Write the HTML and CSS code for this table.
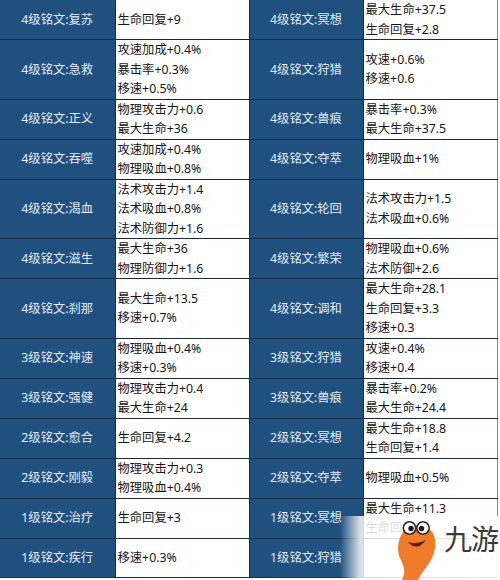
FILE: index.html
```html
<!DOCTYPE html>
<html lang="zh-CN">
<head>
<meta charset="utf-8">
<title>铭文属性</title>
<link rel="stylesheet" href="styles.css">
</head>
<body>
<div class="page">
<table class="runes">
  <colgroup>
    <col class="c-name"><col class="c-attr"><col class="c-name2"><col class="c-attr">
  </colgroup>
  <tr class="r1">
    <th>4级铭文:复苏</th><td>生命回复+9</td>
    <th>4级铭文:冥想</th><td>最大生命+37.5<br>生命回复+2.8</td>
  </tr>
  <tr class="r3">
    <th>4级铭文:急救</th><td>攻速加成+0.4%<br>暴击率+0.3%<br>移速+0.5%</td>
    <th>4级铭文:狩猎</th><td>攻速+0.6%<br>移速+0.6</td>
  </tr>
  <tr class="r1">
    <th>4级铭文:正义</th><td>物理攻击力+0.6<br>最大生命+36</td>
    <th>4级铭文:兽痕</th><td>暴击率+0.3%<br>最大生命+37.5</td>
  </tr>
  <tr class="r1">
    <th>4级铭文:吞噬</th><td>攻速加成+0.4%<br>物理吸血+0.8%</td>
    <th>4级铭文:夺萃</th><td>物理吸血+1%</td>
  </tr>
  <tr class="r3">
    <th>4级铭文:渴血</th><td>法术攻击力+1.4<br>法术吸血+0.8%<br>法术防御力+1.6</td>
    <th>4级铭文:轮回</th><td>法术攻击力+1.5<br>法术吸血+0.6%</td>
  </tr>
  <tr class="r1">
    <th>4级铭文:滋生</th><td>最大生命+36<br>物理防御力+1.6</td>
    <th>4级铭文:繁荣</th><td>物理吸血+0.6%<br>法术防御+2.6</td>
  </tr>
  <tr class="r3">
    <th>4级铭文:刹那</th><td>最大生命+13.5<br>移速+0.7%</td>
    <th>4级铭文:调和</th><td>最大生命+28.1<br>生命回复+3.3<br>移速+0.3</td>
  </tr>
  <tr class="r1">
    <th>3级铭文:神速</th><td>物理吸血+0.4%<br>移速+0.3%</td>
    <th>3级铭文:狩猎</th><td>攻速+0.4%<br>移速+0.4</td>
  </tr>
  <tr class="r1">
    <th>3级铭文:强健</th><td>物理攻击力+0.4<br>最大生命+24</td>
    <th>3级铭文:兽痕</th><td>暴击率+0.2%<br>最大生命+24.4</td>
  </tr>
  <tr class="r1">
    <th>2级铭文:愈合</th><td>生命回复+4.2</td>
    <th>2级铭文:冥想</th><td>最大生命+18.8<br>生命回复+1.4</td>
  </tr>
  <tr class="r1">
    <th>2级铭文:刚毅</th><td>物理攻击力+0.3<br>物理吸血+0.4%</td>
    <th>2级铭文:夺萃</th><td>物理吸血+0.5%</td>
  </tr>
  <tr class="r1">
    <th>1级铭文:治疗</th><td>生命回复+3</td>
    <th>1级铭文:冥想</th><td>最大生命+11.3<br>生命回复+1</td>
  </tr>
  <tr class="r1">
    <th>1级铭文:疾行</th><td>移速+0.3%</td>
    <th>1级铭文:狩猎</th><td></td>
  </tr>
</table>

<div class="watermark">
  <svg class="mascot" viewBox="0 0 42 62" width="42" height="62" aria-hidden="true">
    <path d="M21 7 C35 7 42 16 40 30 C38 44 28 51 23 62 L7 62 C11 54 9 48 5 40 C0 29 5 7 21 7 Z" fill="#f07b2b"/>
    <circle cx="14.5" cy="10" r="6.2" fill="#fff" stroke="#2a2a2a" stroke-width="1.6"/>
    <circle cx="28" cy="10" r="6.2" fill="#fff" stroke="#2a2a2a" stroke-width="1.6"/>
    <circle cx="16" cy="10.5" r="2.7" fill="#1a1a1a"/>
    <circle cx="26.5" cy="10.5" r="2.7" fill="#1a1a1a"/>
    <path d="M13 24 Q22 34 31 22 Q22 27 13 24 Z" fill="#5b1c0c"/>
    <path d="M17.5 27.8 Q22 30.5 26 27.2 Q22.5 31.5 17.5 27.8 Z" fill="#e0485a"/>
  </svg>
  <span class="brand">九游</span>
</div>
</div>
</body>
</html>
```

FILE: styles.css
```css
html, body {
  margin: 0;
  padding: 0;
  background: #ffffff;
}

.page {
  position: relative;
  width: 500px;
  height: 580px;
  overflow: hidden;
}

.runes {
  border-collapse: collapse;
  table-layout: fixed;
  width: 497px;
  font-family: "Noto Sans", "Noto Sans CJK SC", sans-serif;
  font-size: 12.3px;
}

.c-name { width: 115px; }
.c-name2 { width: 114px; }
.c-attr { width: 134px; }

.runes th,
.runes td {
  border: 1px solid #1b2a3a;
  padding: 0 0 0 2px;
  vertical-align: middle;
  line-height: 19.5px;
}

.runes th {
  background: #20507e;
  color: #e3ecf5;
  font-weight: normal;
  text-align: center;
  padding: 0;
  border-color: #132f4c;
}

.runes td {
  background: #ffffff;
  color: #151515;
  text-align: left;
  white-space: nowrap;
}

.runes tr:first-child th,
.runes tr:first-child td {
  border-top: none;
}

.runes th:first-child {
  border-left: none;
}

.runes td:last-child {
  border-right-color: #8a8a8a;
}

.r1 { height: 39px; }
.r3 { height: 59px; }

.watermark {
  position: absolute;
  left: 340px;
  top: 516px;
  width: 160px;
  height: 64px;
  background: linear-gradient(to right, rgba(255,255,255,0) 0, rgba(255,255,255,0.82) 20px, rgba(255,255,255,0.9) 100%);
  display: flex;
  align-items: flex-end;
}

.mascot {
  display: block;
  margin-left: 55px;
}

.brand {
  font-family: "Noto Sans CJK SC", sans-serif;
  font-size: 28px;
  line-height: 30px;
  color: #3b3b3b;
  margin-left: 7px;
  margin-bottom: 27px;
  letter-spacing: -1px;
}
```
